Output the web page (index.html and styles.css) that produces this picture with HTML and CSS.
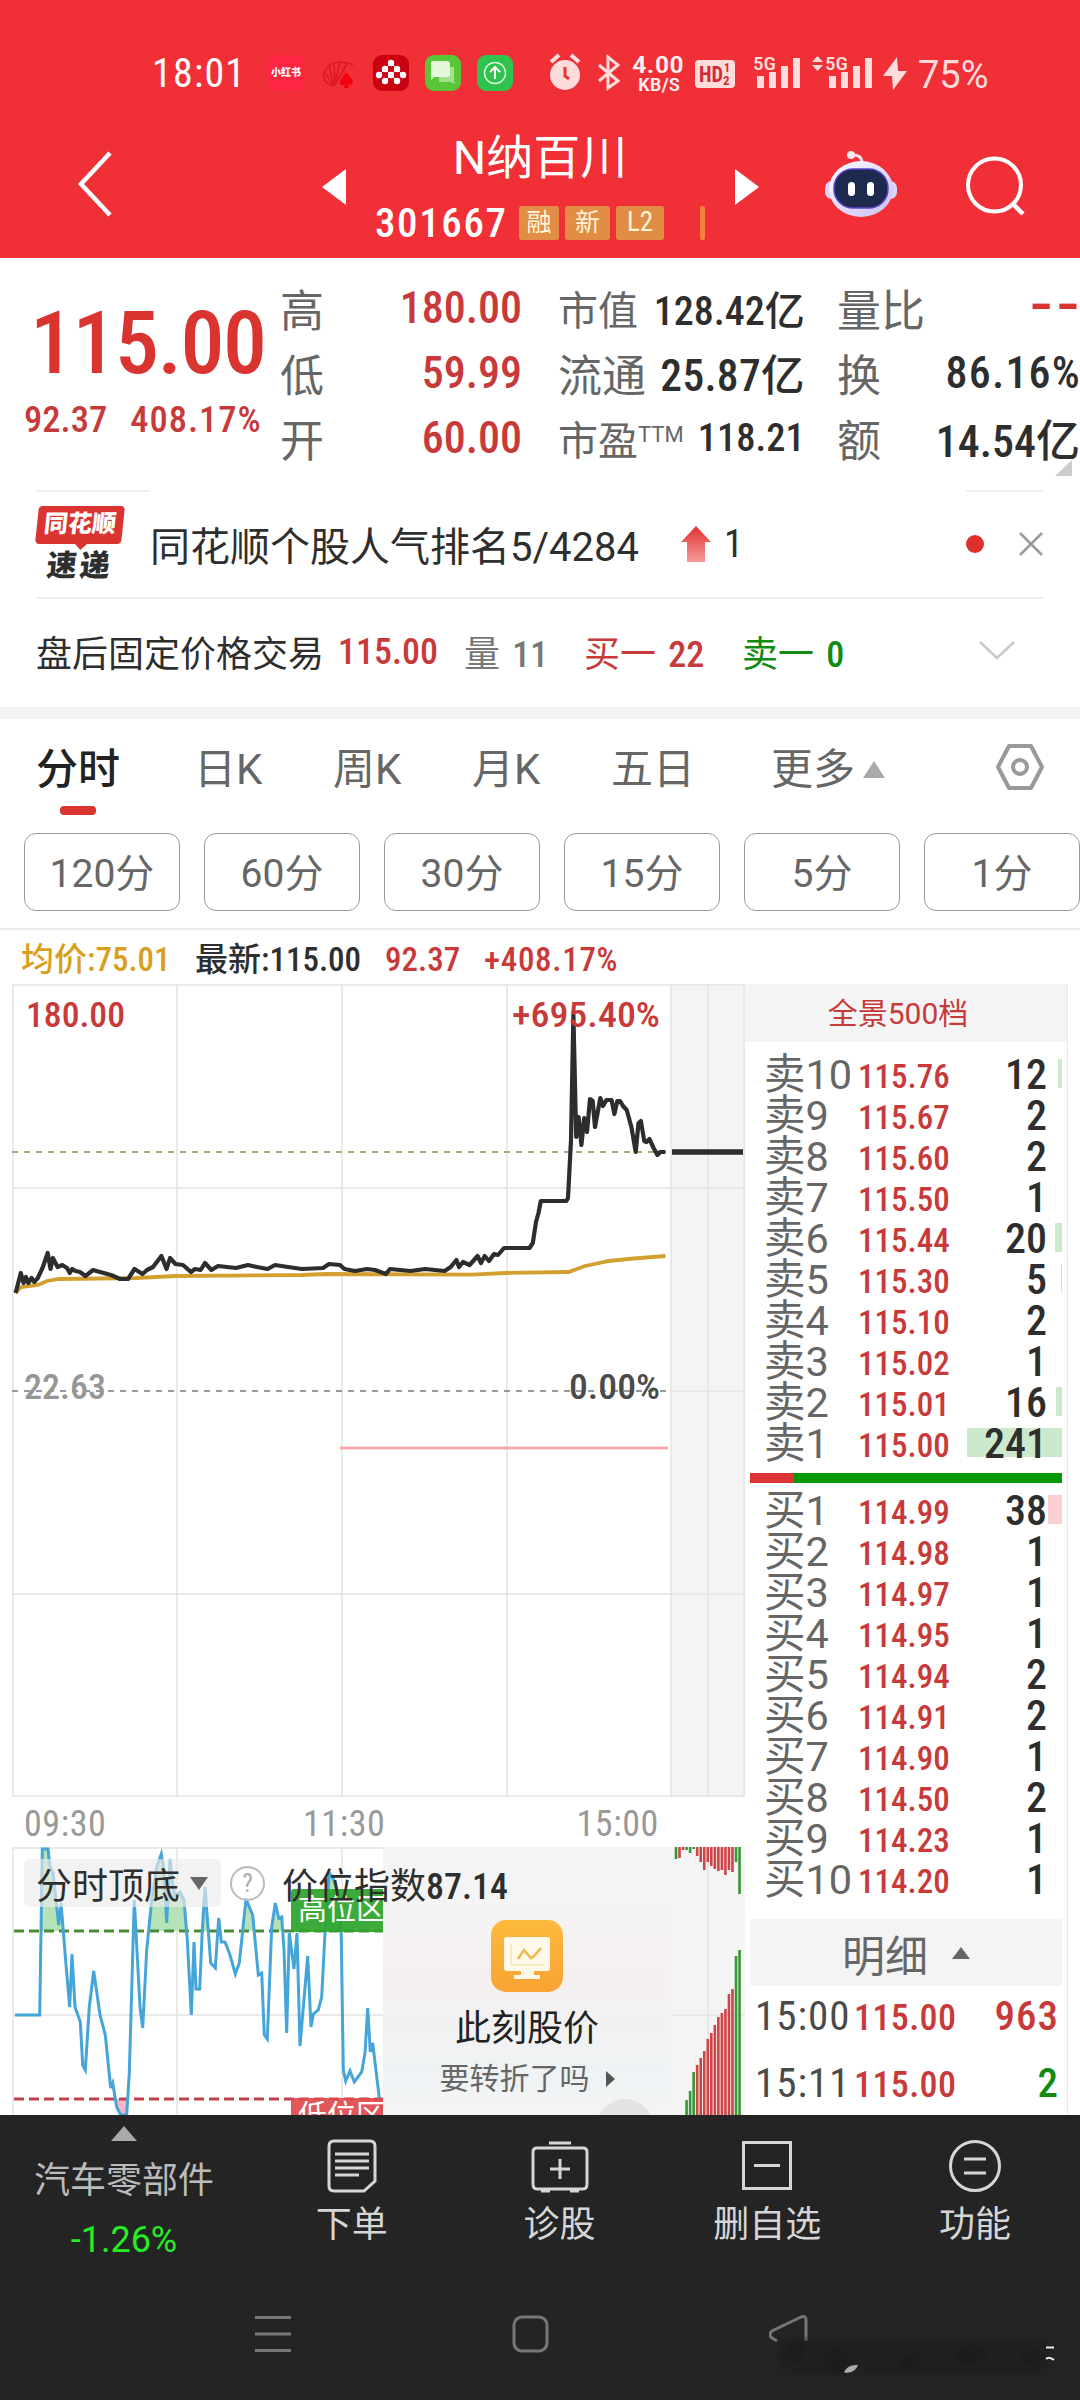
FILE: index.html
```html
<!DOCTYPE html>
<html lang="zh-CN">
<head>
    <meta charset="UTF-8">
    <meta name="viewport" content="width=device-width, initial-scale=1.0">
    <title>N纳百川 301667</title>
    <link rel="stylesheet" href="styles.css">
</head>
<body>

<header class="header">
    <div class="status-bar">
        <span class="clock">18:01</span>
        <div class="notifications">
            <span class="app-icon xhs">小红书</span>
            <svg class="app-icon" viewBox="0 0 36 36">
                <path d="M14 31C5 29 1 22 5 16C9 7 20 4 33 10M14 31L5 18M14 31L9 11M15 30L14 8M15 30L20 6M16 29L27 8" fill="none" stroke="#e01a24" stroke-width="1.800"/>
                <path d="M26 17C23 22 20 24 20 28Q21 32 25 29L24 33H29L28 29Q33 31 33 27C32 23 29 21 26 17Z" fill="#f5000f"/>
            </svg>
            <svg class="app-icon" viewBox="0 0 36 36">
                <rect width="36" height="36" rx="9" fill="#cb0010"/>
                <g fill="#fff">
                    <circle cx="18" cy="8" r="3.2"/><circle cx="12" cy="14" r="3.2"/><circle cx="24" cy="14" r="3.2"/>
                    <circle cx="6" cy="20" r="3.2"/><circle cx="18" cy="20" r="3.2"/><circle cx="30" cy="20" r="3.2"/>
                    <circle cx="12" cy="26" r="3.2"/><circle cx="24" cy="26" r="3.2"/>
                </g>
                <path d="M18 8L6 20M18 8L30 20M12 14L24 26M24 14L12 26" stroke="#fff" stroke-width="1"/>
            </svg>
            <svg class="app-icon" viewBox="0 0 36 36">
                <rect width="36" height="36" rx="9" fill="#58c637"/>
                <path d="M14 12H29V26L30 29L26 27H14Z" fill="#a4e08c"/>
                <path d="M8 6H22Q25 6 25 9V20Q25 22 22 22H9L6 25V8Q6 6 8 6Z" fill="#e4f9da"/>
            </svg>
            <svg class="app-icon" viewBox="0 0 36 36">
                <rect width="36" height="36" rx="9" fill="#2fc24c"/>
                <circle cx="18" cy="18" r="10.5" fill="none" stroke="#d8f5dd" stroke-width="1.5"/>
                <path d="M18 24V12M13 17L18 12L23 17" fill="none" stroke="#fff" stroke-width="2"/>
            </svg>
        </div>
        <svg class="system-icons" viewBox="0 0 445 44" fill="#ffdcdc">
            <circle cx="16" cy="24" r="15"/>
            <path d="M2 11L10 4M22 4L30 11" stroke="#ffdcdc" stroke-width="4"/>
            <path d="M16 16V25L20 28" fill="none" stroke="#f12f36" stroke-width="3"/>
            <path d="M50 14L69 30L59 37V6L69 14L50 30" fill="none" stroke="#ffdcdc" stroke-width="3"/>
            <g fill="#fff3f3" font-weight="500">
                <text x="83" y="22" font-size="24" textLength="52" lengthAdjust="spacingAndGlyphs">4.00</text>
                <text x="89" y="40" font-size="19" textLength="42" lengthAdjust="spacingAndGlyphs">KB/S</text>
            </g>
            <rect x="146" y="9" width="40" height="28" rx="4"/>
            <g fill="#cf2b35" font-weight="700">
                <text x="150" y="31" font-size="22" textLength="24" lengthAdjust="spacingAndGlyphs">HD</text>
                <text x="175" y="21" font-size="12">1</text>
                <text x="174" y="34" font-size="13">2</text>
            </g>
            <text x="204" y="19" font-size="19" font-weight="500" textLength="23" lengthAdjust="spacingAndGlyphs">5G</text>
            <path d="M208 25h7v12h-7zM220 21h7v16h-7zM232 15h7v22h-7zM244 7h7v30h-7z"/>
            <path d="M263 11L268.500 5L274 11ZM263 14L268.500 20L274 14Z"/>
            <text x="276" y="19" font-size="19" font-weight="500" textLength="23" lengthAdjust="spacingAndGlyphs">5G</text>
            <path d="M280 25h7v12h-7zM292 21h7v16h-7zM304 15h7v22h-7zM316 7h7v30h-7z"/>
            <path d="M348 6L334 25H343L344 39L358 20H349Z"/>
            <text class="battery" x="369" y="37">75%</text>
        </svg>
    </div>
    <div class="title-bar">
        <svg class="back" viewBox="0 0 40 70"><path d="M35 4L6 35L35 66" fill="none" stroke="#fff" stroke-width="4.500"/></svg>
        <svg class="prev" viewBox="0 0 24 36"><path d="M24 0V36L0 18Z" fill="#fff"/></svg>
        <div class="stock-title">
            <div class="stock-name">N纳百川</div>
            <div class="stock-sub">
                <span class="stock-code">301667</span>
                <span class="badge">融</span>
                <span class="badge wide">新</span>
                <span class="badge wider">L2</span>
                <span class="badge-bar"></span>
            </div>
        </div>
        <svg class="next" viewBox="0 0 24 36"><path d="M0 0V36L24 18Z" fill="#fff"/></svg>
        <svg class="robot" viewBox="0 0 72 68">
            <defs>
                <linearGradient id="shell" x1="0" y1="0" x2="1" y2="1">
                    <stop offset="0" stop-color="#fff"/><stop offset="1" stop-color="#c9bdf5"/>
                </linearGradient>
            </defs>
            <path d="M26 5Q37 4 37 13" fill="none" stroke="#f6dfe9" stroke-width="3"/>
            <circle cx="26" cy="5" r="4" fill="#f6e6ee"/>
            <rect x="0" y="31" width="72" height="18" rx="7" fill="#ddd5fa"/>
            <ellipse cx="36" cy="39" rx="32" ry="28" fill="url(#shell)"/>
            <rect x="9" y="19" width="54" height="39" rx="19" fill="#1e2a4d" stroke="#5a41c9" stroke-width="1.500"/>
            <rect x="23" y="32" width="7" height="14" rx="3.500" fill="#fff"/>
            <rect x="42" y="32" width="7" height="14" rx="3.500" fill="#fff"/>
        </svg>
        <svg class="search" viewBox="0 0 60 60"><circle cx="28.500" cy="29" r="26.500" fill="none" stroke="#fff" stroke-width="4"/><path d="M47 48L57 58" stroke="#fff" stroke-width="4.500"/></svg>
    </div>
</header>

<section class="quote">
    <div class="quote-main">
        <div class="last-price">115.00</div>
        <div class="change"><span>92.37</span><span>408.17%</span></div>
    </div>
    <dl class="metrics prices">
        <dt>高</dt><dd>180.00</dd>
        <dt>低</dt><dd>59.99</dd>
        <dt>开</dt><dd>60.00</dd>
    </dl>
    <dl class="metrics values">
        <dt class="small">市值</dt><dd>128.42亿</dd>
        <dt>流通</dt><dd class="float">25.87亿</dd>
        <dt class="small">市盈<sup>TTM</sup></dt><dd class="pe">118.21</dd>
    </dl>
    <dl class="metrics turnover">
        <dt>量比</dt><dd class="empty">--</dd>
        <dt>换</dt><dd class="rate">86.16%</dd>
        <dt>额</dt><dd>14.54亿</dd>
    </dl>
    <span class="corner"></span>
</section>

<section class="news">
    <div class="news-logo"><span class="logo-top">同花顺</span><span class="logo-bottom">速递</span></div>
    <span class="news-text">同花顺个股人气排名5/4284</span>
    <svg class="rank-up" viewBox="0 0 30 36">
        <defs><linearGradient id="up" x1="0" y1="0" x2="0" y2="1"><stop offset="0" stop-color="#e3312f"/><stop offset="1" stop-color="#f39a9a"/></linearGradient></defs>
        <path d="M15 0L30 16H24V36H6V16H0Z" fill="url(#up)"/>
    </svg>
    <span class="rank">1</span>
    <span class="dot"></span>
    <svg class="close" viewBox="0 0 24 24"><path d="M1 1L23 23M23 1L1 23" stroke="#999" stroke-width="2.500"/></svg>
</section>

<section class="after-hours">
    <span class="ah-title">盘后固定价格交易</span>
    <span class="ah-price">115.00</span>
    <span class="ah-vol">量 <b>11</b></span>
    <span class="ah-buy">买一 <b>22</b></span>
    <span class="ah-sell">卖一 <b>0</b></span>
    <svg class="expand" viewBox="0 0 36 20"><path d="M1 1L18 17L35 1" fill="none" stroke="#c8c8c8" stroke-width="2.500"/></svg>
</section>

<nav class="tabs">
    <span class="tab active">分时</span>
    <span class="tab">日K</span>
    <span class="tab">周K</span>
    <span class="tab">月K</span>
    <span class="tab">五日</span>
    <span class="tab">更多<i class="caret"></i></span>
    <svg class="settings" viewBox="0 0 48 46"><path d="M13 2H35L46 23L35 44H13L2 23Z" fill="none" stroke="#999" stroke-width="4" stroke-linejoin="round"/><circle cx="24" cy="23" r="7" fill="none" stroke="#999" stroke-width="4"/></svg>
</nav>

<div class="periods">
    <span class="period">120分</span>
    <span class="period">60分</span>
    <span class="period">30分</span>
    <span class="period">15分</span>
    <span class="period">5分</span>
    <span class="period">1分</span>
</div>

<div class="legend">
    <span class="avg">均价:75.01</span>
    <span class="latest">最新:115.00</span>
    <span class="diff">92.37</span>
    <span class="pct">+408.17%</span>
</div>

<main class="board">
    <div class="charts">
        <svg class="price-chart" viewBox="0 0 733 813">
            <rect x="659" y="0" width="74" height="813" fill="#f4f4f4"/>
            <g stroke="#e3e3e3" stroke-width="1.500">
                <path d="M1 0V813M165 0V813M330 0V813M495 0V813M659 0V813M696 0V813M732 0V813"/>
                <path d="M0 1H733M0 204H733M0 610H733M0 812H733M659 407H733"/>
            </g>
            <path d="M0 168H656" stroke="#a9a97d" stroke-width="2" stroke-dasharray="6 6"/>
            <path d="M0 407H656" stroke="#999" stroke-width="2" stroke-dasharray="6 6"/>
            <path d="M328 464H656" stroke="#f2acb1" stroke-width="3"/>
            <text x="14" y="43" class="chart-num" fill="#c8393a" textLength="99" lengthAdjust="spacingAndGlyphs">180.00</text>
            <text x="12" y="415" class="chart-num" fill="#969696" textLength="82" lengthAdjust="spacingAndGlyphs">22.63</text>
            <text x="557" y="415" class="chart-num" fill="#4a4a4a" textLength="91" lengthAdjust="spacingAndGlyphs">0.00%</text>
            <polyline fill="none" stroke="#d3a02f" stroke-width="3.800" points="3.6,309 9,303 26,301 35,297 47,295 125,294 163.5,292 290,291 314,290 460,290.7 493,289 556.6,288 573,282 597,277 616,275 653.4,272"/>
            <polyline fill="none" stroke="#2d2d2d" stroke-width="4.200" stroke-linejoin="round" points="3.6,309 8.8,289 11.6,299 14,293 16.3,299 19.6,294 22.4,298 25.8,294 30.5,284 35.7,269 38.5,285 40.9,274 45.6,283 50.3,281 55,284 57.8,289 60.2,285 63.5,287 68,288 73.4,292 81,286 88,288 99,291 108,295 116,295 122.5,285 130.5,290 135,286 141,283 149.4,272 154.6,285 158,274 163.5,280 171,281 179,288 183,285 188.6,286 193,279 199.4,286 206,282 224,284 236,281 245,283 255.6,285 263,281 276,283 290,285 311,284 317,280 328,281 332.5,285 343,287 355,285 363,286 374,290 378,285 398.6,287 413,285 432.6,287 438.7,283 444.4,276 447,283 451,278 457.6,281 465.6,272 469,279 472.7,272 477,277 482,270 486,271 492,264 517.5,264 520.8,259 524,238 526.5,229 528.8,217 554.3,217 556,214 559,156 561.4,31 564.2,153 566.6,133 569.4,161 572.2,134 575,148 578,115 580.7,117 583,143 588.3,114 591,122 594.4,116 599.6,116 602.4,130 605.3,117 608,117 611,122 614.7,126 619.4,143 623.7,168 626.5,139 628.9,137 632.2,157 634.5,158 637.4,155 641.6,164 645.4,171 648.2,168 653.4,168"/>
            <text x="500" y="43" class="chart-num" fill="#c8393a" textLength="148" lengthAdjust="spacingAndGlyphs">+695.40%</text>
            <path d="M660 168H731" stroke="#2d2d2d" stroke-width="5.500"/>
        </svg>
        <div class="time-axis"><span>09:30</span><span>11:30</span><span>15:00</span></div>
        <div class="indicator">
            <svg class="indicator-chart" viewBox="0 0 733 268">
                <defs>
                    <clipPath id="above"><rect x="0" y="0" width="372" height="84"/></clipPath>
                    <clipPath id="below"><rect x="0" y="252" width="372" height="16"/></clipPath>
                </defs>
                <rect x="659" y="0" width="74" height="268" fill="#f4f4f4"/>
                <path d="M1 0V268M165 0V268M330 0V268M696 0V268M0 1H660M0 168H733" stroke="#e3e3e3" stroke-width="1.500"/>
                <path id="highFill" clip-path="url(#above)" fill="#b5e2b6"/>
                <path id="lowFill" clip-path="url(#below)" fill="#f6b6c4"/>
                <path d="M2 84H372" stroke="#4a8b3a" stroke-width="3" stroke-dasharray="10 5"/>
                <path d="M2 252H372" stroke="#c0414d" stroke-width="3" stroke-dasharray="10 5"/>
                <path id="indexLine" fill="none" stroke="#45a5d8" stroke-width="3"/>
                <path d="M279 85V45Q279 42 282 42H372V85Z" fill="#2da52c" fill-opacity=".93"/>
                <path d="M279 251H372V268H279Z" fill="#e04a4c" fill-opacity=".93"/>
                <text x="286" y="73" class="zone" textLength="87">高位区</text>
                <text x="286" y="279" class="zone" textLength="87">低位区</text>
                <path d="M488 0H567" stroke="#45a5d8" stroke-width="2"/>
                <g id="volume"></g>
            </svg>
            <div class="promo">
                <svg class="promo-icon" viewBox="0 0 72 72">
                    <defs><linearGradient id="gold" x1="0" y1="0" x2="0" y2="1"><stop offset="0" stop-color="#fcba3d"/><stop offset="1" stop-color="#f9a233"/></linearGradient></defs>
                    <rect width="72" height="72" rx="15" fill="url(#gold)"/>
                    <path d="M16 17H56Q59 17 59 20V48Q59 51 56 51H43V55H49V59H23V55H30V51H16Q13 51 13 48V20Q13 17 16 17Z" fill="#fff9ea"/>
                    <path d="M27 39L33 30L40 38L43 36L50 28" fill="none" stroke="#eeb64f" stroke-width="2.500"/>
                    <path d="M20 24V45H53" fill="none" stroke="#f8e3b8" stroke-width="1.500"/>
                </svg>
                <div class="promo-title">此刻股价</div>
                <div class="promo-link">要转折了吗<i></i></div>
                <span class="promo-round"></span>
            </div>
            <div class="indicator-head">
                <span class="selector">分时顶底<i></i></span>
                <span class="help">?</span>
                <span class="index-value">价位指数<b>87.14</b></span>
            </div>
        </div>
    </div>

    <aside class="book">
        <div class="book-head">全景500档</div>
        <div class="levels" id="asks"></div>
        <div class="ratio"><i></i></div>
        <div class="levels" id="bids"></div>
        <div class="detail-head">明细<i></i></div>
        <div class="trade"><span>15:00</span><span>115.00</span><b>963</b></div>
        <div class="trade"><span>15:11</span><span>115.00</span><b class="green">2</b></div>
    </aside>
</main>

<footer class="footer">
    <div class="actions">
        <div class="sector"><i></i><span>汽车零部件</span><b>-1.26%</b></div>
        <div class="action">
            <svg viewBox="0 0 60 54"><path d="M12 2H48Q53 2 53 7V42L42 52H12Q7 52 7 47V7Q7 2 12 2ZM13 15H47M13 22H47M13 29H47M13 36H37"/></svg>
            <span>下单</span>
        </div>
        <div class="action">
            <svg viewBox="0 0 60 54"><path d="M7 9H53Q57 9 57 13V45Q57 50 53 50H7Q3 50 3 45V13Q3 9 7 9ZM19 4H41M30 20V40M20 30H40M11 52H20M40 52H49"/></svg>
            <span>诊股</span>
        </div>
        <div class="action">
            <svg viewBox="0 0 60 54"><path d="M6.500 3.500H53.500V49.500H6.500ZM17 26.500H43"/></svg>
            <span>删自选</span>
        </div>
        <div class="action">
            <svg viewBox="0 0 60 54"><circle cx="30" cy="27" r="24.500"/><path d="M19 20H41M19 34H41"/></svg>
            <span>功能</span>
        </div>
    </div>
    <div class="system-nav">
        <svg viewBox="0 0 40 40"><path d="M2 3.500H38M2 20H38M2 36.500H38"/></svg>
        <svg viewBox="0 0 40 40"><rect x="3" y="3" width="33" height="34" rx="8"/></svg>
        <svg viewBox="0 0 40 40"><path d="M3 24Q-1 21 3 17L32 3Q37 1 37 6V27M3 24L8 27"/></svg>
        <svg class="smudge" viewBox="0 0 300 50">
            <g class="dark">
                <rect x="8" y="8" width="272" height="34" rx="10"/>
                <ellipse cx="24" cy="18" rx="10" ry="11"/><ellipse cx="66" cy="28" rx="13" ry="12"/>
                <ellipse cx="140" cy="30" rx="10" ry="9"/><ellipse cx="200" cy="22" rx="16" ry="10"/>
                <ellipse cx="262" cy="25" rx="12" ry="9"/>
            </g>
            <path d="M74 39Q78 31 88 32Q86 39 76 40Z" class="spark"/>
            <path d="M276 14.500H284M276 26Q279 23 284 27" class="fleck"/>
        </svg>
    </div>
</footer>

<script>
    const asks = [
        ['卖10', '115.76', 12, 4], ['卖9', '115.67', 2, 0], ['卖8', '115.60', 2, 0], ['卖7', '115.50', 1, 0],
        ['卖6', '115.44', 20, 7], ['卖5', '115.30', 5, 1], ['卖4', '115.10', 2, 0], ['卖3', '115.02', 1, 0],
        ['卖2', '115.01', 16, 6], ['卖1', '115.00', 241, 95]
    ];
    const bids = [
        ['买1', '114.99', 38, 14], ['买2', '114.98', 1, 0], ['买3', '114.97', 1, 0], ['买4', '114.95', 1, 0],
        ['买5', '114.94', 2, 0], ['买6', '114.91', 2, 0], ['买7', '114.90', 1, 0], ['买8', '114.50', 2, 0],
        ['买9', '114.23', 1, 0], ['买10', '114.20', 1, 0]
    ];

    function renderLevels(id, rows) {
        document.getElementById(id).innerHTML = rows.map(([label, price, qty, bar]) =>
            `<div class="level"><i style="width: ${bar}px"></i><span>${label}</span><em>${price}</em><b>${qty}</b></div>`
        ).join('');
    }

    renderLevels('asks', asks);
    renderLevels('bids', bids);

    // price position index
    const index = '3,168 27.7,168 30.3,2 36,2 38,20 41,26 46.7,78 49,56 54.7,126 57.7,160 60,107 63,160 68.3,175 70.7,218 73.3,223 77.3,160 81.7,124 88,168 93.3,188 98.7,241 100.7,236 104.7,260 108.7,268 114.7,268 117.3,226 122.3,53 128,160 130.7,181 134.7,103 139.7,53 144.7,20 149.3,7 152,23 154.7,76 158,12 160.3,33 163,50 168,45 172,53 175.3,93 179.3,168 182,95 184,142 187.7,142 190.3,83 193,40 198.7,116 203.3,121 206.7,71 209.3,95 213,95 218,108 223.3,127 227.3,116 234,52 240.7,68 246.3,128 249.7,126 252.3,188 255.3,192 259.7,80 263.3,56 266.7,71 269.7,70 272,103 274.7,186 277.3,86 282,122 285,86 288,199 295.7,109 299,180 301.3,167 306.3,163 309.7,150 313,86 317.3,26 321,31 328,53 329.3,93 331.3,223 333.7,234 338,224 342.3,235 349.7,225 353,206 355.7,161 358.3,205 360.7,196 367.3,251 372,268';
    const line = 'M' + index.replace(/ /g, 'L');
    document.getElementById('indexLine').setAttribute('d', line);
    document.getElementById('highFill').setAttribute('d', line + 'V268H3Z');
    document.getElementById('lowFill').setAttribute('d', line + 'V0H3Z');

    // bars hanging from the top and rising from the bottom: [height, colour]
    const down = [[12,'g'],[11,'r'],[3,'r'],[3,'g'],[6,'g'],[2,'g'],[9,'r'],[15,'r'],[23,'r'],[15,'r'],[19,'r'],[22,'r'],[24,'r'],[23,'r'],[28,'r'],[23,'r'],[25,'r'],[15,'g'],[47,'g']];
    const up = [[0,'g'],[0,'g'],[0,'g'],[15,'g'],[24,'g'],[43,'g'],[50,'r'],[57,'r'],[64,'r'],[76,'r'],[82,'r'],[90,'r'],[98,'r'],[102,'r'],[106,'r'],[121,'r'],[126,'r'],[159,'g'],[165,'g']];
    const color = { g: '#379637', r: '#cf4547' };
    let bars = '';
    down.forEach(([h, c], i) => {
        bars += `<rect x="${662.7 + i * 3.53}" y="0" width="2.6" height="${h}" fill="${color[c]}"/>`;
    });
    up.forEach(([h, c], i) => {
        bars += `<rect x="${662.7 + i * 3.53}" y="${268 - h}" width="2.6" height="${h}" fill="${color[c]}"/>`;
    });
    document.getElementById('volume').innerHTML = bars;
</script>

</body>
</html>
```
FILE: styles.css
```css
* {
    box-sizing: border-box;
}
body {
    margin: 0;
    width: 1080px;
    height: 2400px;
    overflow: hidden;
    background: #fff;
    color: #2e2e2e;
    font-family: Roboto, "Noto Sans CJK SC", sans-serif;
    font-stretch: condensed;
    white-space: nowrap;
}
i, em {
    font-style: normal;
}
b {
    font-weight: 500;
}
svg {
    display: block;
    flex-shrink: 0;
}

/* header */
.header {
    height: 258px;
    background: #f12f36;
    color: #fff;
}
.status-bar {
    display: flex;
    align-items: center;
    height: 116px;
    padding: 30px 0 0 152px;
}
.clock {
    width: 116px;
    font-size: 40px;
    letter-spacing: 1.2px;
}
.notifications {
    display: flex;
    gap: 16.3px;
    width: 281px;
}
.app-icon {
    width: 36px;
    height: 36px;
    flex-shrink: 0;
}
.xhs {
    border-radius: 9px;
    background: #ff2442;
    font-size: 10px;
    font-weight: 900;
    line-height: 36px;
    text-align: center;
}
.system-icons {
    width: 445px;
    height: 44px;
}
.battery {
    font-size: 38px;
    font-stretch: normal;
}
.title-bar {
    display: flex;
    height: 142px;
}
.back {
    width: 40px;
    height: 70px;
    margin: 33px 0 0 75px;
}
.prev, .next {
    width: 24px;
    height: 36px;
    margin-top: 53px;
}
.prev {
    margin-left: 207px;
}
.stock-title {
    width: 389px;
    padding: 14px 0 0 29px;
}
.stock-name {
    width: 330px;
    text-align: center;
    font-size: 47px;
    font-stretch: normal;
    line-height: 56px;
}
.stock-sub {
    display: flex;
    align-items: center;
    height: 36px;
    margin-top: 19px;
    gap: 6px;
}
.stock-code {
    width: 138px;
    font-size: 41px;
    letter-spacing: 1.6px;
    font-weight: 500;
}
.badge {
    width: 40px;
    height: 34px;
    border-radius: 3px;
    background: #e28d45;
    color: #fff6da;
    font-size: 25px;
    line-height: 33px;
    text-align: center;
}
.badge.wide {
    width: 45px;
}
.badge.wider {
    width: 48px;
    font-size: 27px;
}
.badge-bar {
    width: 5px;
    height: 34px;
    margin-left: 30px;
    border-radius: 2px;
    background: #f5803f;
}
.robot {
    width: 72px;
    height: 68px;
    margin: 34px 0 0 66px;
}
.search {
    width: 60px;
    height: 60px;
    margin: 40px 0 0 69px;
}

/* quote */
.quote {
    position: relative;
    display: flex;
    height: 232px;
    padding-top: 17px;
}
.quote-main {
    width: 280px;
    color: #d9342f;
}
.last-price {
    padding: 17px 0 0 30px;
    font-size: 88px;
    letter-spacing: -1.5px;
    font-weight: 500;
    line-height: 102px;
}
.change {
    display: flex;
    gap: 23px;
    padding: 5px 0 0 24px;
    color: #c8393a;
    font-size: 36.5px;
    font-weight: 500;
    line-height: 42px;
}
.change span:last-child {
    letter-spacing: 1px;
}
.metrics {
    display: grid;
    grid-template-columns: auto 1fr;
    grid-auto-rows: 65px;
    align-items: center;
    margin: 0;
    font-size: 44px;
}
.metrics dt {
    color: #666;
}
.metrics dd {
    margin: 0;
    text-align: right;
    font-weight: 500;
}
.prices {
    width: 242px;
}
.prices dd {
    color: #c8393a;
}
.values {
    width: 243px;
    margin-left: 36px;
}
.values dd {
    margin-left: -30px;
    font-size: 40px;
}
.values .float {
    font-size: 43.5px;
    letter-spacing: .3px;
}
.values .small {
    font-size: 40px;
}
.values .pe {
    font-size: 38.5px;
}
.values sup {
    font-size: 22px;
    font-stretch: normal;
    line-height: 20px;
    vertical-align: 13px;
}
.turnover {
    width: 243px;
    margin-left: 36px;
}
.turnover dd {
    font-size: 44px;
}
.turnover .rate {
    letter-spacing: 1.2px;
    margin-right: -1px;
}
.turnover .empty {
    color: #d9342f;
    font-size: 72px;
    font-stretch: normal;
    font-weight: 400;
    letter-spacing: 7px;
    margin-right: -5px;
    line-height: 40px;
    padding-bottom: 8px;
}
.corner {
    position: absolute;
    right: 8px;
    bottom: 14px;
    border-left: 17px solid transparent;
    border-bottom: 16px solid #ccc;
}

/* news */
.news {
    display: flex;
    align-items: center;
    height: 109px;
    margin: 0 37px 0 36px;
    border-bottom: 2px solid #f0f0f0;
    background: linear-gradient(#f0f0f0, #f0f0f0) 0 0 / 114px 2px no-repeat, linear-gradient(#f0f0f0, #f0f0f0) 100% 0 / 77px 2px no-repeat;
}
.news-logo {
    width: 114px;
    height: 76px;
    padding-left: 1px;
}
.logo-top {
    display: block;
    width: 86px;
    height: 38px;
    border-radius: 4px;
    background: #d9342f;
    color: #fff;
    font-size: 24px;
    font-weight: 900;
    line-height: 37px;
    text-align: center;
    transform: skewX(-6deg);
}
.logo-top::after {
    content: "";
    position: absolute;
    left: 40px;
    top: 38px;
    border: 6px solid transparent;
    border-bottom: 0;
    border-top-color: #d9342f;
}
.logo-bottom {
    display: block;
    padding: 3px 0 0 10px;
    font-size: 30px;
    font-weight: 900;
    line-height: 38px;
    transform: skewX(-6deg);
    letter-spacing: 3px;
}
.news-text {
    width: 531px;
    font-size: 40px;
    font-stretch: normal;
}
.rank-up {
    width: 30px;
    height: 36px;
}
.rank {
    width: 255px;
    padding-left: 13px;
    font-size: 39px;
}
.dot {
    width: 18px;
    height: 18px;
    flex-shrink: 0;
    border-radius: 50%;
    background: #df2f2a;
}
.close {
    width: 24px;
    height: 24px;
    margin-left: 35px;
}

/* after hours */
.after-hours {
    display: flex;
    align-items: center;
    height: 120px;
    padding: 0 0 5px 36px;
    border-bottom: 12px solid #f4f4f4;
    font-size: 36px;
}
.ah-title {
    width: 302px;
}
.ah-price {
    width: 126px;
    padding-top: 3px;
    color: #c8393a;
    font-weight: 500;
}
.ah-vol {
    width: 120px;
    color: #777;
}
.ah-buy {
    width: 158px;
    color: #c8393a;
}
.ah-sell {
    width: 237px;
    color: #138a13;
}
.after-hours b {
    margin-left: 4px;
}
.expand {
    width: 36px;
    height: 20px;
}

/* tabs */
.tabs {
    display: flex;
    height: 114px;
    padding: 23px 36px 0;
    font-size: 42px;
    line-height: 56px;
    color: #666;
}
.tab {
    width: 139px;
}
.tab:nth-child(1) {
    width: 158px;
}
.tab:nth-child(-n+4) {
    font-stretch: normal;
}
.tab:nth-child(5) {
    width: 160px;
}
.tab:nth-child(6) {
    width: 223px;
}
.tab.active {
    color: #222;
    font-weight: 500;
}
.tab.active::after {
    content: "";
    display: block;
    width: 36px;
    height: 9px;
    margin: 8px 0 0 24px;
    border-radius: 4px;
    background: #d9342f;
}
.caret {
    display: inline-block;
    margin: 0 0 6px 8px;
    border: 11px solid transparent;
    border-top: 0;
    border-bottom: 17px solid #aaa;
}
.settings {
    width: 48px;
    height: 46px;
    margin: 2px 0 0 2px;
}
.periods {
    display: flex;
    gap: 24px;
    height: 97px;
    padding-left: 24px;
    border-bottom: 2px solid #ececec;
}
.period {
    flex: none;
    width: 156px;
    height: 78px;
    border: 1.5px solid #999;
    border-radius: 12px;
    color: #666;
    font-size: 39px;
    font-stretch: normal;
    line-height: 80px;
    text-align: center;
}
.legend {
    display: flex;
    height: 54px;
    padding-left: 21px;
    font-size: 33px;
    font-weight: 500;
    line-height: 60px;
    color: #c8393a;
}
.legend .avg {
    width: 174px;
    color: #d89f1e;
}
.legend .latest {
    width: 190px;
    color: #2e2e2e;
}
.legend .diff {
    width: 99px;
}
.legend .pct {
    letter-spacing: .7px;
}

/* charts */
.board {
    display: flex;
    height: 1131px;
    padding-left: 12px;
}
.charts {
    width: 733px;
}
.price-chart {
    width: 733px;
    height: 813px;
}
.chart-num {
    font-size: 35px;
    font-weight: 500;
}
.time-axis {
    display: grid;
    grid-template-columns: 278px 1fr 100px;
    height: 50px;
    padding: 0 86px 0 12px;
    color: #999;
    font-size: 36px;
    letter-spacing: .6px;
    line-height: 54px;
}
.time-axis span:nth-child(2) {
    padding-left: 1px;
}
.time-axis span:last-child {
    text-align: right;
}
.indicator {
    position: relative;
    height: 268px;
    overflow: hidden;
}
.indicator-chart {
    width: 733px;
    height: 268px;
}
.zone {
    fill: #fff;
    font-size: 29px;
}
.promo {
    position: absolute;
    top: 0;
    left: 371px;
    display: flex;
    flex-direction: column;
    align-items: center;
    width: 288px;
    height: 268px;
    padding-top: 73px;
    background: linear-gradient(#f5f5f5cc, #f5efefcc 50%, #edf2f4cc 85%, #f4f4f4cc), #f4f4f4;
}
.promo-icon {
    width: 72px;
    height: 72px;
}
.promo-title {
    margin-top: 12px;
    color: #222;
    font-size: 36px;
    line-height: 50px;
}
.promo-link {
    display: flex;
    align-items: center;
    gap: 16px;
    color: #666;
    font-size: 30px;
    line-height: 50px;
}
.promo-link i {
    border: 8px solid transparent;
    border-right: 0;
    border-left: 9px solid #555;
}
.promo-round {
    position: absolute;
    left: 213px;
    top: 252px;
    width: 58px;
    height: 58px;
    border-radius: 50%;
    background: #e2e3e4;
}
.indicator-head {
    position: absolute;
    top: 12px;
    left: 12px;
    display: flex;
    align-items: center;
    height: 48px;
    font-size: 36px;
    color: #2e2e2e;
}
.selector {
    display: flex;
    align-items: center;
    gap: 10px;
    width: 197px;
    height: 48px;
    padding-left: 12px;
    border-radius: 6px;
    background: rgba(235, 235, 235, .65);
}
.selector i {
    border: 9px solid transparent;
    border-bottom: 0;
    border-top: 13px solid #666;
}
.help {
    width: 35px;
    height: 35px;
    margin-left: 9px;
    border: 2px solid #bbb;
    border-radius: 50%;
    color: #aaa;
    font-size: 25px;
    line-height: 31px;
    text-align: center;
}
.index-value {
    margin-left: 17px;
}

/* order book */
.book {
    width: 323px;
    border-right: 1px solid #e8e8e8;
}
.book-head {
    height: 58px;
    padding-right: 16px;
    background: #f4f4f4;
    color: #c8393a;
    font-size: 30px;
    font-stretch: normal;
    line-height: 59px;
    text-align: center;
}
.levels {
    padding: 9px 5px 0 19px;
}
.level {
    position: relative;
    display: grid;
    grid-template-columns: 94px 1fr auto;
    align-items: center;
    height: 41px;
    padding-right: 15px;
    font-size: 42px;
    line-height: 41px;
}
.level i {
    position: absolute;
    right: 0;
    top: 8px;
    height: 29px;
    background: #cce9cd;
}
#bids .level i {
    background: #f9cfd0;
}
.level span {
    color: #666;
    font-size: 41.5px;
    font-stretch: normal;
}
.level em {
    padding-top: 5px;
    color: #c8393a;
    font-size: 33px;
    font-weight: 500;
}
.level b {
    position: relative;
}
.ratio {
    height: 10px;
    margin: 12px 5px 0;
    background: #069706;
}
.ratio i {
    display: block;
    width: 44px;
    height: 10px;
    background: #dc3434;
}
#bids {
    padding-top: 4px;
}
.detail-head {
    display: flex;
    justify-content: center;
    align-items: center;
    gap: 24px;
    height: 67px;
    margin: 22px 5px 0;
    background: #f4f4f4;
    color: #666;
    font-size: 43px;
}
.detail-head i {
    border: 9px solid transparent;
    border-top: 0;
    border-bottom: 12px solid #666;
}
.trade {
    display: grid;
    grid-template-columns: 99px 1fr auto;
    align-items: center;
    height: 67px;
    padding: 0 8px 8px 10px;
    font-size: 41px;
    letter-spacing: 1px;
    color: #c8393a;
}
.trade span:first-child {
    color: #4a4a4a;
}
.trade span:nth-child(2) {
    padding-top: 4px;
    font-size: 36px;
    letter-spacing: .4px;
    font-weight: 500;
}
.trade .green {
    color: #138a13;
}

/* footer */
.footer {
    position: relative;
    height: 285px;
    background: #242424;
    color: #d6d6d6;
}
.actions {
    display: flex;
    height: 180px;
    font-size: 36px;
}
.sector {
    display: flex;
    flex-direction: column;
    align-items: center;
    width: 248px;
    padding-top: 11px;
    color: #bbb;
}
.sector i {
    border: 13px solid transparent;
    border-top: 0;
    border-bottom: 15px solid #aaa;
}
.sector span {
    margin-top: 14px;
    line-height: 52px;
}
.sector b {
    margin-top: 9px;
    color: #22ee22;
    font-size: 36px;
    font-stretch: normal;
    font-weight: 400;
    line-height: 48px;
}
.action {
    display: flex;
    flex-direction: column;
    align-items: center;
    width: 207.700px;
    padding-top: 24px;
}
.action svg {
    width: 60px;
    height: 54px;
    fill: none;
    stroke: #d6d6d6;
    stroke-width: 3;
}
.action span {
    margin-top: 6px;
    line-height: 52px;
}
.system-nav {
    display: flex;
    gap: 218px;
    padding: 19px 0 0 253px;
}
.system-nav svg {
    width: 40px;
    height: 40px;
    fill: none;
    stroke: #777;
    stroke-width: 3;
}
.system-nav .smudge {
    position: absolute;
    left: 770px;
    top: 218px;
    width: 300px;
    height: 50px;
    fill: #202020;
    stroke: none;
}
.smudge .dark {
    filter: blur(3px);
}
.smudge ellipse {
    fill: #1c1c1c;
}
.smudge .spark {
    fill: #aaa;
}
.smudge .fleck {
    fill: none;
    stroke: #eee;
    stroke-width: 2;
}
```
